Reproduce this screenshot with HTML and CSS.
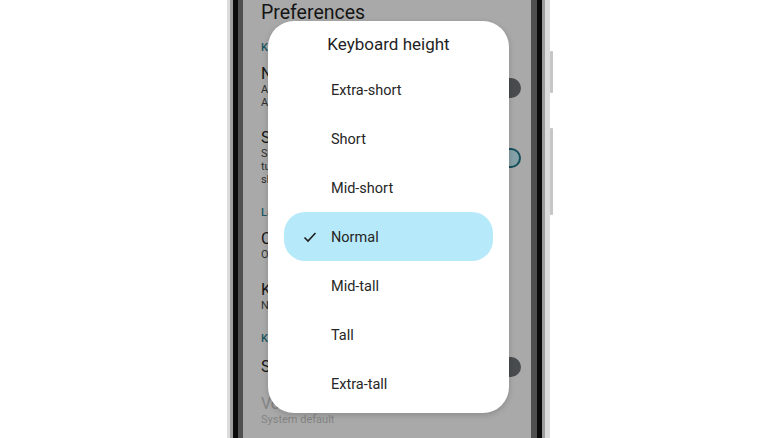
FILE: index.html
```html
<!DOCTYPE html>
<html lang="en">
<head>
  <meta charset="UTF-8">
  <title>Preferences - Keyboard height</title>
  <meta name="viewport" content="width=device-width, initial-scale=1.0">
  <link rel="stylesheet" href="styles.css">
</head>
<body>

  <div class="phone">
    <span class="side-btn volume"></span>
    <span class="side-btn power"></span>
    <div class="frame">
      <div class="bezel">
        <div class="inner">
          <div class="screen">

            <h1 class="pref-title">Preferences</h1>

            <div class="pref-label">Keys</div>
            <div class="pref-item">
              <div class="pref-text">
                <div class="pref-name">Number row</div>
                <div class="pref-summary">Always show number row<br>Above the letter keys</div>
              </div>
              <span class="switch"></span>
            </div>
            <div class="pref-item">
              <div class="pref-text">
                <div class="pref-name">Show emoji switch key</div>
                <div class="pref-summary">Show a button to<br>turn on the emoji<br>shortcut bar</div>
              </div>
              <span class="switch on"></span>
            </div>

            <div class="pref-label">Layout</div>
            <div class="pref-item">
              <div class="pref-text">
                <div class="pref-name">One-handed mode</div>
                <div class="pref-summary">Off</div>
              </div>
            </div>
            <div class="pref-item">
              <div class="pref-text">
                <div class="pref-name">Keyboard height</div>
                <div class="pref-summary">Normal</div>
              </div>
            </div>

            <div class="pref-label">Key press</div>
            <div class="pref-item">
              <div class="pref-text">
                <div class="pref-name">Sound on keypress</div>
              </div>
              <span class="switch"></span>
            </div>
            <div class="pref-item disabled">
              <div class="pref-text">
                <div class="pref-name">Volume on keypress</div>
                <div class="pref-summary">System default</div>
              </div>
            </div>

            <div class="scrim"></div>

            <div class="dialog">
              <div class="dialog-title">Keyboard height</div>
              <ul class="options">
                <li>Extra-short</li>
                <li>Short</li>
                <li>Mid-short</li>
                <li class="selected">
                  <svg class="check" width="14" height="14" viewBox="0 0 14 14">
                    <polyline points="1.5,7.5 5,11 12.5,3" fill="none" stroke="#1f1f1f" stroke-width="1.6"/>
                  </svg>
                  Normal
                </li>
                <li>Mid-tall</li>
                <li>Tall</li>
                <li>Extra-tall</li>
              </ul>
            </div>

          </div>
        </div>
      </div>
    </div>
  </div>

</body>
</html>
```

FILE: styles.css
```css
body {
  margin: 0;
  background: #fff;
  font-family: Roboto, "Noto Sans", sans-serif;
  height: 438px;
  overflow: hidden;
}

/* device body, layered edges from outside in */
.phone {
  position: relative;
  width: 315px;
  margin-left: 227px;
  border-left: 3px solid #dcdcdc;
  border-right: 5px solid #dcdcdc;
}

.frame {
  border-left: 3px solid #9e9e9e;
  border-right: 3px solid #9e9e9e;
}

.bezel {
  border-left: 5px solid #0b0b0b;
  border-right: 5px solid #0b0b0b;
}

.inner {
  border-left: 5px solid #505050;
  border-right: 6px solid #505050;
}

.side-btn {
  position: absolute;
  right: -8px;
  width: 3px;
  background: #c6c6c6;
  border-radius: 1px;
}

.side-btn.volume {
  top: 51px;
  height: 42px;
}

.side-btn.power {
  top: 128px;
  height: 87px;
}

.screen {
  position: relative;
  height: 438px;
  background: #fafafa;
  padding: 0 10px 0 18px;
  color: #1f1f1f;
  overflow: hidden;
}

.pref-title {
  margin: 0 0 5px;
  font-size: 19.5px;
  font-weight: 400;
  line-height: 26px;
}

.pref-label {
  padding-top: 10px;
  font-size: 11px;
  font-weight: 500;
  line-height: 14px;
  color: #2f7f91;
}

.pref-item {
  display: flex;
  align-items: center;
  justify-content: space-between;
  padding: 11px 0 10px;
}

.pref-name {
  font-size: 16px;
  line-height: 16px;
}

.pref-summary {
  font-size: 11px;
  line-height: 13px;
  margin-top: 1px;
  color: #444746;
}

.pref-item.disabled {
  padding-top: 9px;
}

.pref-item.disabled .pref-name,
.pref-item.disabled .pref-summary {
  color: #c2c2c2;
}

.switch {
  width: 40px;
  height: 20px;
  border-radius: 10px;
  background: #6c7075;
  flex-shrink: 0;
}

.switch.on {
  box-sizing: border-box;
  background: #c4ecf5;
  border: 2px solid #1f7587;
}

.scrim {
  position: absolute;
  inset: 0;
  background: rgba(0, 0, 0, 0.32);
}

.dialog {
  position: absolute;
  left: 25px;
  top: 21px;
  width: 241px;
  height: 392px;
  background: #fff;
  border-radius: 26px;
  box-shadow: 0 2px 6px rgba(0, 0, 0, 0.18);
}

.dialog-title {
  height: 44px;
  line-height: 46px;
  text-align: center;
  font-size: 17px;
  color: #1f1f1f;
}

.options {
  list-style: none;
  margin: 0;
  padding: 0 16px;
}

.options li {
  position: relative;
  height: 49px;
  line-height: 51px;
  padding-left: 47px;
  font-size: 14.5px;
  color: #262626;
}

.options li.selected {
  background: #b6eafa;
  border-radius: 21px;
}

.check {
  position: absolute;
  left: 19px;
  top: 18px;
}
```
